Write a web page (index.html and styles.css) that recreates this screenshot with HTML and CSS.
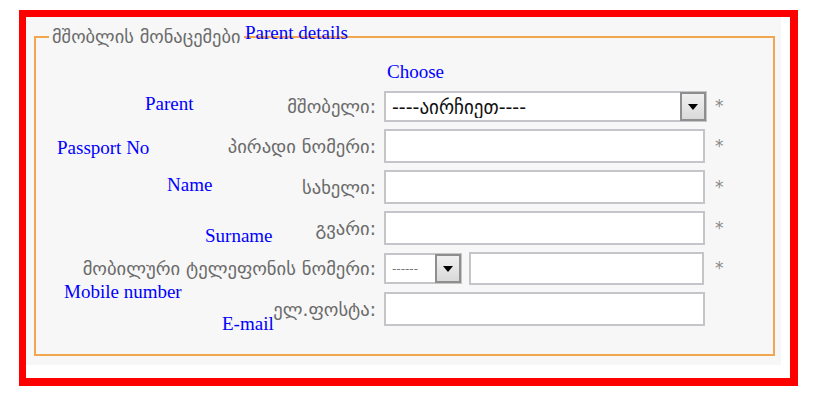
FILE: index.html
```html
<!DOCTYPE html>
<html lang="ka">
<head>
  <meta charset="UTF-8">
  <meta name="viewport" content="width=device-width, initial-scale=1.0">
  <title>მშობლის მონაცემები</title>
  <link rel="stylesheet" href="styles.css">
</head>
<body>
  <div class="frame">
    <div class="panel">
      <fieldset class="group">
        <legend>მშობლის მონაცემები</legend>
        <div class="form-grid">
          <label for="parent">მშობელი:</label>
          <div class="select select-wide">
            <select id="parent">
              <option>----აირჩიეთ----</option>
            </select>
            <span class="select-arrow"></span>
          </div>
          <span class="req">*</span>

          <label for="pid">პირადი ნომერი:</label>
          <input type="text" id="pid" class="field">
          <span class="req">*</span>

          <label for="fname">სახელი:</label>
          <input type="text" id="fname" class="field">
          <span class="req">*</span>

          <label for="lname">გვარი:</label>
          <input type="text" id="lname" class="field">
          <span class="req">*</span>

          <label for="mobile">მობილური ტელეფონის ნომერი:</label>
          <div class="phone">
            <div class="select select-small">
              <select id="prefix">
                <option>------</option>
              </select>
              <span class="select-arrow"></span>
            </div>
            <input type="text" id="mobile" class="field field-phone">
          </div>
          <span class="req">*</span>

          <label for="email">ელ.ფოსტა:</label>
          <input type="text" id="email" class="field">
          <span></span>
        </div>
      </fieldset>
    </div>
  </div>

  <!-- translation notes laid over the form -->
  <span class="note note-details">Parent details</span>
  <span class="note note-choose">Choose</span>
  <span class="note note-parent">Parent</span>
  <span class="note note-passport">Passport No</span>
  <span class="note note-name">Name</span>
  <span class="note note-surname">Surname</span>
  <span class="note note-mobile">Mobile number</span>
  <span class="note note-email">E-mail</span>
</body>
</html>
```

FILE: styles.css
```css
body {
  margin: 0;
  position: relative;
  background: #fff;
  font-family: "DejaVu Sans", sans-serif;
  color: #666;
}
.frame {
  margin: 10px 0 0 19px;
  width: 779px;
  height: 376px;
  box-sizing: border-box;
  border: solid #ff0000;
  border-width: 7px 8px 8px 7px;
  background: #fff;
}
.panel {
  width: 755px;
  height: 348px;
  background: #f7f7f7;
  padding-top: 12px;
  box-sizing: border-box;
}
.group {
  margin: 0 6px 0 8px;
  padding: 46px 0 28px 0;
  border: 2px solid #f2a650;
  min-width: 0;
}
.group legend {
  margin-left: 13px;
  padding: 0 3px;
  font-size: 18.4px;
  line-height: 16px;
  color: #6a6a6a;
}
.form-grid {
  display: grid;
  grid-template-columns: 340px 323px auto;
  grid-template-rows: 31px 34px 34px 34px 33px 34px;
  column-gap: 8px;
  row-gap: 7px;
  align-items: center;
}
.form-grid label {
  text-align: right;
  font-size: 18.6px;
  color: #6a6a6a;
  white-space: nowrap;
}
.field {
  width: 321px;
  height: 34px;
  box-sizing: border-box;
  border: 2px solid #c4c4c9;
  background: #fff;
  margin: 0;
  padding: 0 6px;
  font-size: 14px;
}
.select {
  position: relative;
  height: 31px;
  box-sizing: border-box;
  border: 2px solid #c4c4c9;
  background: #fff;
}
.select select {
  appearance: none;
  -webkit-appearance: none;
  border: none;
  background: transparent;
  width: 100%;
  height: 100%;
  margin: 0;
  padding: 0 6px;
  font-family: "DejaVu Sans", sans-serif;
  font-size: 19px;
  color: #111;
  outline: none;
}
.select-wide {
  width: 323px;
}
.select-small {
  width: 78px;
}
.select-small select {
  color: #777;
  font-size: 12px;
}
.select-arrow {
  position: absolute;
  top: -1px;
  right: -1px;
  bottom: -1px;
  width: 26px;
  box-sizing: border-box;
  border: 2px solid #8e8e8e;
  background: linear-gradient(#f0f0f0, #d9d9d9);
  display: flex;
  align-items: center;
  justify-content: center;
}
.select-arrow::after {
  content: "";
  border-left: 5px solid transparent;
  border-right: 5px solid transparent;
  border-top: 6px solid #000;
}
.phone {
  display: flex;
  align-items: center;
  gap: 7px;
}
.field-phone {
  width: 235px;
  height: 33px;
}
.req {
  font-size: 17px;
  color: #8a8a8a;
  line-height: 1;
}
.note {
  position: absolute;
  font-family: "Liberation Serif", serif;
  font-size: 19px;
  line-height: 19px;
  color: #0000ff;
  white-space: nowrap;
}
.note-details { left: 245px; top: 23px; }
.note-choose { left: 387px; top: 62px; }
.note-parent { left: 145px; top: 94px; }
.note-passport { left: 57px; top: 138px; }
.note-name { left: 167px; top: 175px; }
.note-surname { left: 205px; top: 226px; }
.note-mobile { left: 64px; top: 282px; }
.note-email { left: 222px; top: 314px; }
```
